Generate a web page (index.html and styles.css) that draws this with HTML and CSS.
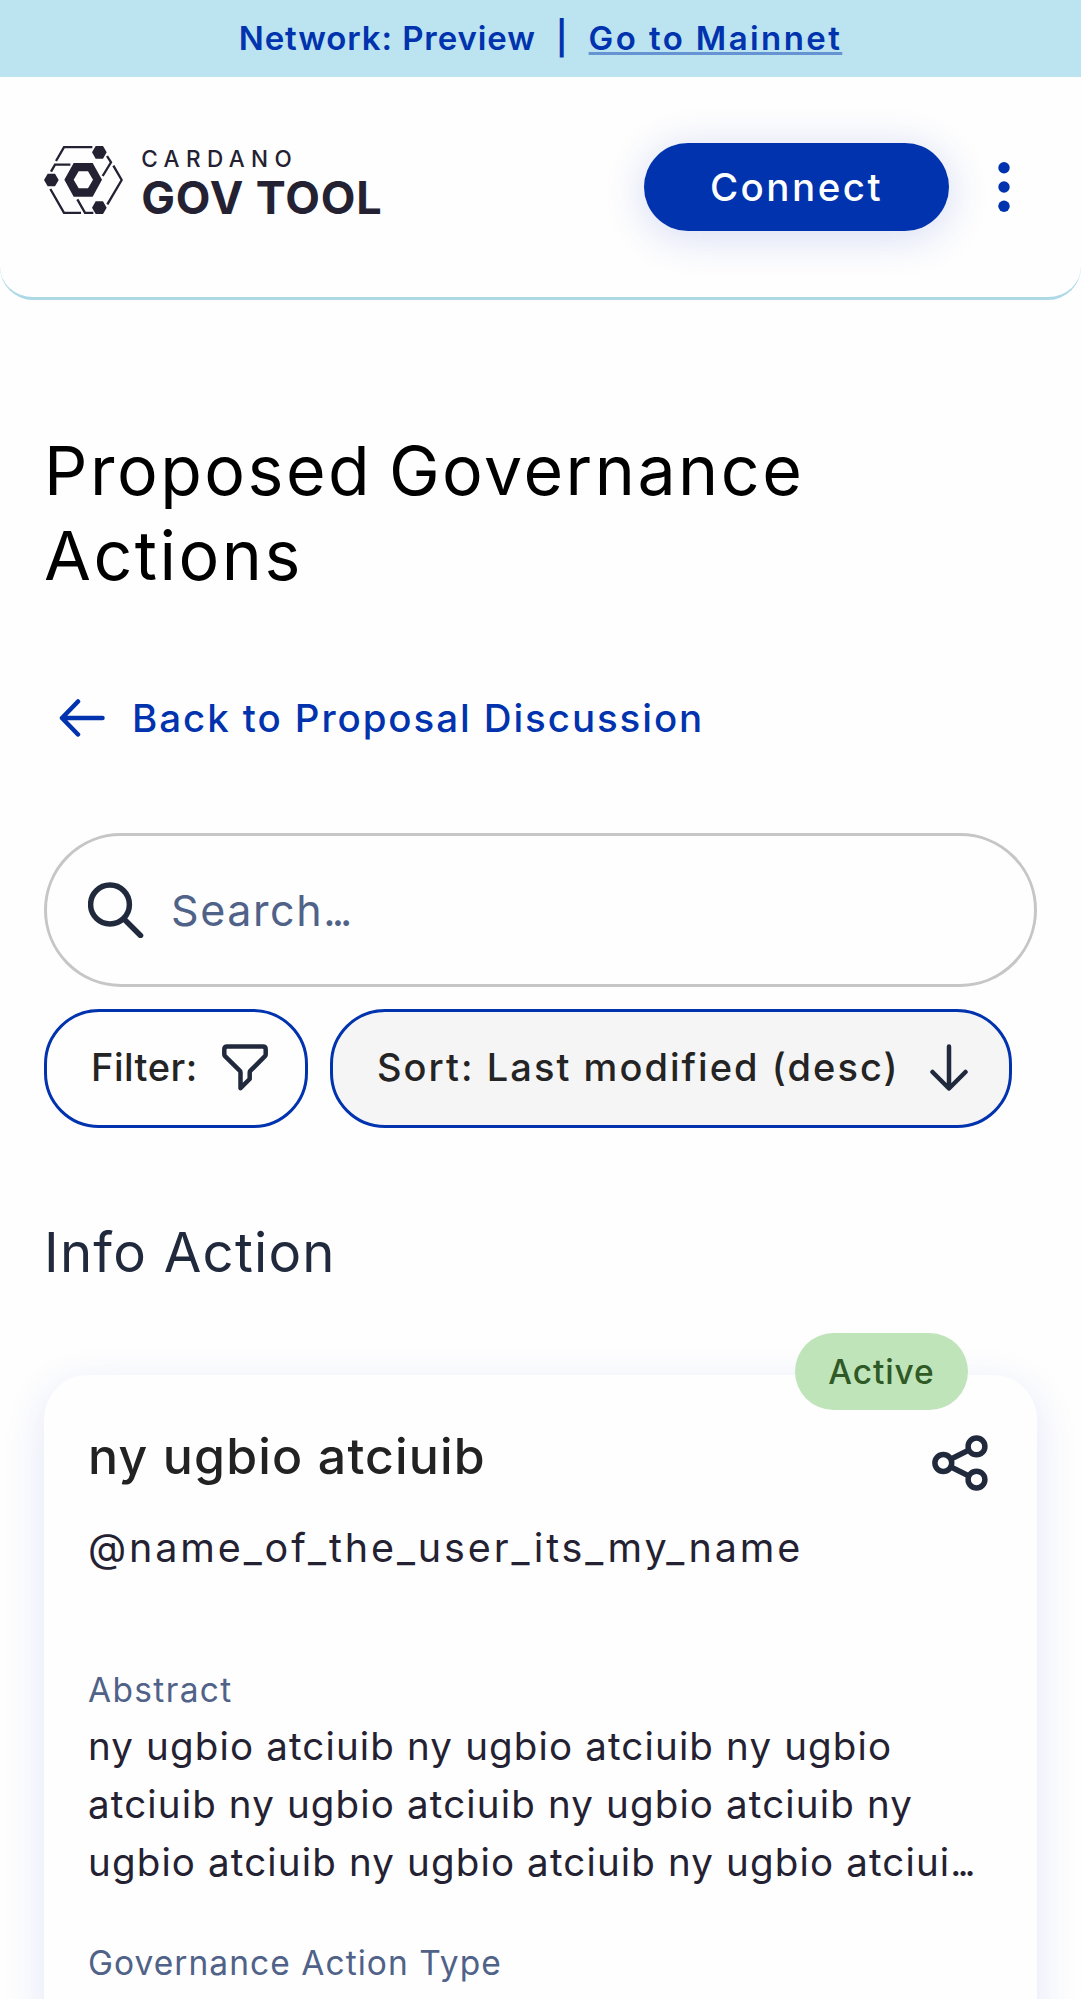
FILE: index.html
```html
<!DOCTYPE html>
<html lang="en">
<head>
<meta charset="utf-8">
<title>Cardano GovTool</title>
<link rel="stylesheet" href="styles.css">
</head>
<body>
<div class="network-banner">
  <span class="network-name">Network: Preview</span>
  <span class="network-divider">|</span>
  <a class="network-link" href="#">Go to Mainnet</a>
</div>
<header class="header">
  <a class="logo" href="#">
    <svg class="logo-mark" viewBox="42 48 236 204" fill="none" stroke="#242232" stroke-width="7">
      <path d="M78 93 102 51.500H187M231 78 243 97 218 138M63 125 75 104H121M250 107 275 150 232 223M61 177 102 248.500H153M142 208 165 248.500H190"/>
      <g fill="#242232" stroke="none">
        <path d="M186 67 197 48H219L230 67 219 86H197ZM42 150 53 131H75L86 150 75 169H53ZM186 233 197 214H219L230 233 219 252H197Z"/>
        <path fill-rule="evenodd" d="M103 149 131 99H188L216 149 188 200H131ZM131 149 146 175H174L189 149 174 124H146Z"/>
      </g>
    </svg>
    <span class="logo-text">
      <span class="logo-top">CARDANO</span>
      <span class="logo-bottom">GOV TOOL</span>
    </span>
  </a>
  <button class="connect">Connect</button>
  <svg class="menu-dots" viewBox="0 0 12 50" fill="#0033ad"><circle cx="6" cy="5.800" r="5.700"/><circle cx="6" cy="25" r="5.700"/><circle cx="6" cy="44.200" r="5.700"/></svg>
</header>
<main class="content">
  <h1 class="page-title">Proposed Governance<br>Actions</h1>
  <a class="back" href="#">
    <svg class="back-icon" viewBox="0 0 46 38" fill="none" stroke="#0033ad" stroke-width="4.500" stroke-linecap="round" stroke-linejoin="round"><path d="M43.500 19H3M19 2.500 3 19 19 35.500"/></svg>
    <span>Back to Proposal Discussion</span>
  </a>
  <div class="search">
    <svg class="search-icon" viewBox="0 0 56 56" fill="none" stroke="#212a3d" stroke-width="5.500" stroke-linecap="round"><circle cx="22" cy="22.500" r="19.400"/><path d="M37 38 52.500 53.500"/></svg>
    <span class="search-label">Search<span class="dots">...</span></span>
  </div>
  <div class="chips">
    <button class="chip chip-filter">
      <span>Filter:</span>
      <svg class="filter-icon" viewBox="0 0 46 47" fill="none" stroke="#212a3d" stroke-width="4.500" stroke-linejoin="round"><path d="M5 2.500H41Q43.700 2.500 43.700 5.200V10.500Q43.700 11.500 43 12.200L28.500 26.700Q27.700 27.500 27.700 28.500V35L18.500 44.200V28.500Q18.500 27.500 17.700 26.700L3 12.200Q2.300 11.500 2.300 10.500V5.200Q2.300 2.500 5 2.500Z"/></svg>
    </button>
    <button class="chip chip-sort">
      <span>Sort: Last modified (desc)</span>
      <svg class="sort-icon" viewBox="0 0 38 47" fill="none" stroke="#212a3d" stroke-width="4.500" stroke-linecap="round" stroke-linejoin="round"><path d="M19 2.500V44M2.500 28 19 44.500 35.500 28"/></svg>
    </button>
  </div>
  <h2 class="section-title">Info Action</h2>
  <article class="card">
    <span class="badge">Active</span>
    <div class="card-head">
      <h3 class="card-title">ny ugbio atciuib</h3>
      <svg class="share-icon" viewBox="0 0 56 56" fill="none" stroke="#212a3d" stroke-width="5.500"><circle cx="44.500" cy="11.400" r="8.400"/><circle cx="11.300" cy="28" r="8.400"/><circle cx="44.500" cy="44.600" r="8.400"/><path d="M19 24 37 15M19 32 37 41"/></svg>
    </div>
    <p class="author">@name_of_the_user_its_my_name</p>
    <p class="field-name">Abstract</p>
    <p class="abstract">ny ugbio atciuib ny ugbio atciuib ny ugbio<br>atciuib ny ugbio atciuib ny ugbio atciuib ny<br>ugbio atciuib ny ugbio atciuib ny ugbio atciui<span class="dots">...</span></p>
    <p class="field-name field-type">Governance Action Type</p>
  </article>
</main>
</body>
</html>
```
FILE: styles.css
```css
* { box-sizing: border-box; }
body { margin: 0; height: 1999px; overflow: hidden; background: #fefefe; color: #242232; font-family: Inter, "Noto Sans", sans-serif; }
h1, h2, h3, p { margin: 0; font-weight: 400; }
a { color: inherit; text-decoration: none; }
button { padding: 0; border: 0; font: inherit; }
svg { display: block; flex: none; }

.network-banner { display: flex; justify-content: center; height: 77px; background: #bbe3f0; color: #0033ad; font-size: 33px; font-weight: 600; line-height: 77px; white-space: nowrap; }
.network-name { letter-spacing: .9px; }
.network-divider { margin: 0 21px 0 20px; }
.network-link { letter-spacing: 2.400px; text-decoration: underline; text-decoration-color: rgba(0, 51, 173, .45); text-decoration-thickness: 3px; text-underline-offset: 2px; text-decoration-skip-ink: none; }

.header { display: flex; align-items: flex-start; height: 222.500px; padding: 66px 71px 0 44px; border-bottom: 3px solid #add8e6; border-radius: 0 0 33px 33px; }
.logo { display: flex; margin: 3px auto 0 0; }
.logo-mark { width: 78.700px; height: 68px; }
.logo-text { display: flex; flex-direction: column; gap: 5px; margin: 2px 0 0 18.500px; line-height: 1; white-space: nowrap; }
.logo-top { font-size: 22.500px; font-weight: 500; line-height: 22px; letter-spacing: 6.400px; }
.logo-bottom { font-size: 45px; font-weight: 650; letter-spacing: .9px; }
.connect { width: 305px; height: 88px; border-radius: 44px; background: #0033ad; color: #fff; font-size: 38.500px; font-weight: 500; letter-spacing: 2.500px; box-shadow: 0 5.500px 41px rgba(47, 72, 200, .2); }
.menu-dots { width: 12px; height: 50px; margin: 19px 0 0 49px; }

.content { padding: 128px 44px 0; }
.page-title { color: #000; font-size: 68px; line-height: 85px; letter-spacing: 2.500px; word-spacing: -5px; }
.back { display: flex; align-items: center; height: 44px; margin-top: 98px; padding-left: 15px; color: #0033ad; font-size: 38.500px; font-weight: 500; letter-spacing: 1.920px; }
.back-icon { width: 46px; height: 38px; margin-right: 27px; }
.search { display: flex; align-items: center; height: 154px; margin-top: 93.500px; padding-left: 41px; border: 3px solid #c6c6c6; border-radius: 77px; color: #506288; font-size: 43px; }
.search-icon { width: 56px; height: 56px; margin-right: 27px; }
.search-label { letter-spacing: 1.600px; }
.dots { letter-spacing: -4px; }
.chips { display: flex; gap: 22px; margin-top: 22px; }
.chip { display: flex; align-items: center; height: 118.500px; padding: 0 0 2px 44px; border: 3px solid #0033ad; border-radius: 55px; background: #fefefe; color: #242424; font-size: 38px; font-weight: 500; white-space: nowrap; }
.chip-filter { width: 264px; letter-spacing: .5px; }
.chip-sort { width: 682px; background: #f5f5f5; letter-spacing: 2.050px; }
.filter-icon { width: 46px; height: 47px; margin: 0 37px 0 auto; }
.sort-icon { width: 38px; height: 47px; margin: 0 41px 0 auto; }

.section-title { margin-top: 91px; color: #212a3d; font-size: 54.500px; line-height: 66px; letter-spacing: 1.250px; }
.card { position: relative; height: 680px; margin-top: 90.500px; padding: 51px 44px 0; border-radius: 44px; background: #fefefe; box-shadow: 0 11px 41px rgba(47, 72, 220, .13); }
.badge { position: absolute; top: -42px; right: 69px; display: flex; align-items: center; justify-content: center; width: 173px; height: 77px; border-radius: 38.500px; background: #c0e4ba; color: #2f5a25; font-size: 33.500px; font-weight: 500; letter-spacing: .9px; }
.card-head { display: flex; justify-content: space-between; height: 60px; }
.card-title { color: #222; font-size: 50px; font-weight: 500; line-height: 60px; letter-spacing: 1.150px; }
.share-icon { width: 56px; height: 56px; margin: 9px 5px 0 0; }
.author { margin-top: 33px; font-size: 39.500px; line-height: 58px; letter-spacing: 2.880px; }
.field-name { margin-top: 91px; color: #506288; font-size: 33.500px; line-height: 44px; letter-spacing: 1.350px; }
.abstract { margin-top: 5px; font-size: 38.500px; line-height: 58px; letter-spacing: 1.150px; white-space: nowrap; }
.field-type { margin-top: 50px; letter-spacing: 1.050px; }
```
